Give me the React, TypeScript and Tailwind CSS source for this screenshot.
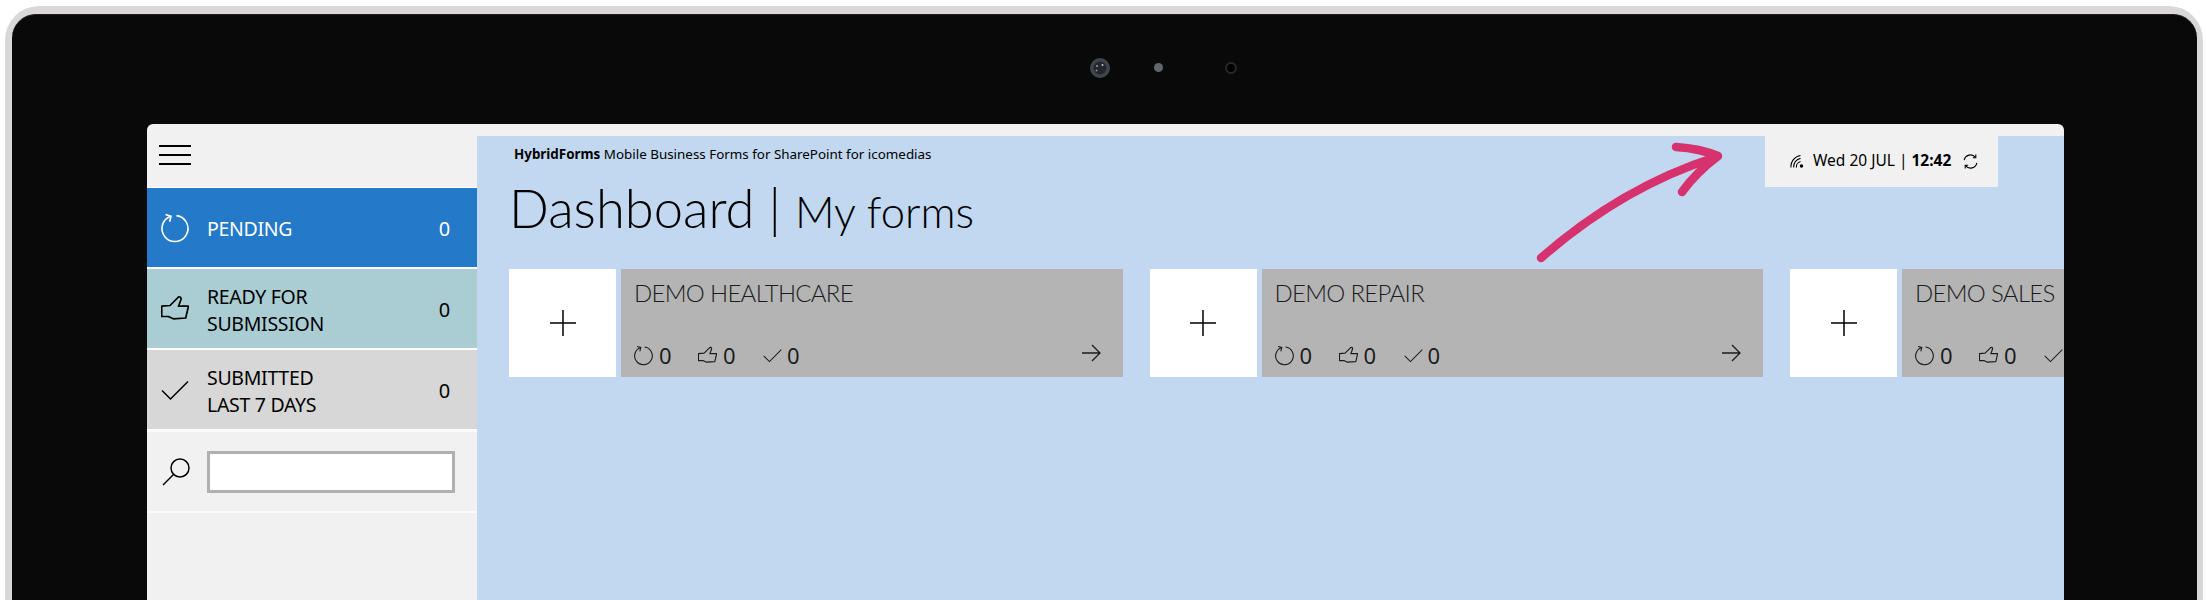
import React from "react";

type IconProps = { size: number; className?: string };

// all the line icons share one 28 box so sidebar and card versions stay the same drawing
const PendingIcon = ({ size, className }: IconProps) => (
  <svg width={size} height={size} viewBox="0 0 28 28" fill="none" stroke="currentColor" strokeWidth="1.6" className={`overflow-visible ${className ?? ""}`}>
    <path d="M15.5 1.6A13 13 0 1 1 9.8 2.2" />
    <path d="M4.5 0.6L10 2.2L8.6 7.8" />
  </svg>
);

const ThumbIcon = ({ size, className }: IconProps) => (
  <svg width={size} height={size} viewBox="0 0 28 28" fill="none" stroke="currentColor" strokeWidth="1.7" strokeLinejoin="round" className={className}>
    <path d="M0.7 21.5V11.2L9 10.5L16.5 3C18 1 20.5 2 20 4.5L17.5 11.2H27.5L24.7 23L12.3 23.8L7.3 21.5Z" />
  </svg>
);

const CheckIcon = ({ size, className }: IconProps) => (
  <svg width={size} height={size} viewBox="0 0 28 28" fill="none" stroke="currentColor" strokeWidth="1.5" className={className}>
    <path d="M1 14.5L9.5 23L27 5.5" />
  </svg>
);

const SearchIcon = ({ size, className }: IconProps) => (
  <svg width={size} height={size} viewBox="0 0 28 28" fill="none" stroke="currentColor" strokeWidth="1.5" className={className}>
    <circle cx="18" cy="10" r="9" />
    <path d="M11.5 16.5L1 27" />
  </svg>
);

const PlusIcon = () => (
  <svg width="28" height="28" viewBox="0 0 28 28" fill="none" stroke="currentColor" strokeWidth="1.5">
    <path d="M14 1V27M1 14H27" />
  </svg>
);

const ArrowIcon = () => (
  <svg width="19" height="18" viewBox="0 0 19 18" fill="none" stroke="currentColor" strokeWidth="1.3">
    <path d="M0 9H18M10 1L18 9L10 17" />
  </svg>
);

const SignalIcon = () => (
  <svg width="14" height="14" viewBox="0 0 14 14" fill="none" stroke="currentColor" strokeWidth="1.1">
    <path d="M1 13.5A11 11 0 0 1 10.5 1.5M3.8 13.5A8.2 8.2 0 0 1 10.5 4.4M6.5 13.5A5.4 5.4 0 0 1 10.5 7.5" />
    <circle cx="11.5" cy="12" r="1.7" fill="currentColor" stroke="none" />
  </svg>
);

const SyncIcon = () => (
  <svg width="15" height="15" viewBox="0 0 15 15" fill="none" stroke="currentColor" strokeWidth="1.1">
    <path d="M1.2 6.2A6.3 6.3 0 0 1 12.4 3.4M13.8 8.8A6.3 6.3 0 0 1 2.6 11.6" />
    <path d="M12.8 0.6V3.8H9.8M2.2 14.4V11.2H5.2" />
  </svg>
);

const CameraLens = () => (
  <svg width="20" height="20" viewBox="0 0 20 20">
    <circle cx="10" cy="10" r="10" fill="#3f464d" />
    <circle cx="10" cy="10" r="6.5" fill="#23272c" />
    <circle cx="7" cy="8" r="1" fill="#9aa0a6" />
    <circle cx="12.5" cy="7" r="1" fill="#c2c6ca" />
    <circle cx="6.5" cy="12.5" r="1" fill="#8a9096" />
  </svg>
);

function NavRow({ lines, bg, text, icon }: { lines: string[]; bg: string; text: string; icon: React.ReactNode }) {
  return (
    <div className={`flex h-[79px] items-center pr-[27px] pl-[14px] text-[19.5px] leading-[27px] tracking-[-0.3px] ${bg} ${text}`}>
      <div className="flex w-[46px] shrink-0 items-center">{icon}</div>
      <div className="flex-1 pt-[2px]">
        {lines.map((line) => (
          <div key={line}>{line}</div>
        ))}
      </div>
      <span className="pt-[2px] text-[20px]">0</span>
    </div>
  );
}

function FormCard({ name }: { name: string }) {
  return (
    <div className="flex shrink-0 gap-[5px]">
      <div className="flex h-[108px] w-[107px] items-center justify-center bg-white text-black">
        <PlusIcon />
      </div>
      <div className="flex h-[108px] w-[501.5px] flex-col justify-between bg-[#b4b4b4] pt-[7px] pr-[22px] pb-[8px] pl-[13px] text-[#1c1c1c]">
        <div className="font-['Lato',sans-serif] text-[24px] font-light leading-[34px] tracking-[-0.7px]">{name}</div>
        <div className="flex items-center text-[22px] leading-[27px]">
          <PendingIcon size={19} />
          <span className="ml-[6px] w-[39px]">0</span>
          <ThumbIcon size={19} />
          <span className="ml-[6px] w-[40px]">0</span>
          <CheckIcon size={19} />
          <span className="ml-[5px]">0</span>
          <div className="mb-[6px] ml-auto">
            <ArrowIcon />
          </div>
        </div>
      </div>
    </div>
  );
}

export default function App() {
  return (
    <div className="relative h-[600px] overflow-hidden bg-white pt-[6px] pr-[3px] pl-[5px] font-['Noto_Sans',sans-serif]">
      <div className="h-[594px] rounded-t-[34px] bg-[#d8d8d8] pt-[8px] pr-[6px] pl-[7px]">
        <div className="h-[586px] rounded-t-[24px] border-t border-[#2a1a1a] bg-[#090909] pr-[133px] pl-[135px]">
          {/* camera and sensors */}
          <div className="flex h-[109px] items-center pb-[4px] pl-[943px]">
            <CameraLens />
            <div className="ml-[44px] h-[9px] w-[9px] rounded-full bg-[#5f666d]" />
            <div className="ml-[62px] h-[12px] w-[12px] rounded-full border-2 border-[#26282b] bg-black" />
          </div>

          <div className="flex h-[476px] overflow-hidden rounded-t-[6px] bg-[#f1f1f1]">
            <aside className="w-[330px] shrink-0">
              <div className="flex h-[63px] flex-col gap-[7px] pt-[21px] pl-[12px]">
                <div className="h-[2px] w-[32px] bg-black" />
                <div className="h-[2px] w-[32px] bg-black" />
                <div className="h-[2px] w-[32px] bg-black" />
              </div>
              <div className="flex flex-col gap-[2px] bg-white py-[1px]">
                <NavRow lines={["PENDING"]} bg="bg-[#2479c8]" text="text-white" icon={<PendingIcon size={28} />} />
                <NavRow lines={["READY FOR", "SUBMISSION"]} bg="bg-[#aacdd4]" text="text-black" icon={<ThumbIcon size={28} />} />
                <NavRow lines={["SUBMITTED", "LAST 7 DAYS"]} bg="bg-[#d7d7d7]" text="text-black" icon={<CheckIcon size={28} />} />
              </div>
              <div className="flex h-[83px] items-center border-y-2 border-[#fafafa] pr-[22px] pl-[15px] text-black">
                <SearchIcon size={28} />
                <input className="ml-[17px] h-[42px] w-[248px] border-[3px] border-[#b0b0b0] bg-white outline-none" />
              </div>
            </aside>

            <main className="mt-[12px] min-w-0 flex-1 overflow-hidden bg-[#c1d8f0] text-black">
              <div className="flex h-[51px] justify-between pr-[66px] pl-[37px]">
                <div className="pt-[8px] text-[13.4px] leading-[20px]">
                  <span className="font-bold">HybridForms</span> Mobile Business Forms for SharePoint for icomedias
                </div>
                <div className="flex w-[233px] items-center bg-[#f1f1f1] pb-[1px] pl-[25px] text-[15.5px]">
                  <SignalIcon />
                  <span className="ml-[9px]">
                    Wed 20 JUL | <span className="font-bold">12:42</span>
                  </span>
                  <div className="ml-[12px]">
                    <SyncIcon />
                  </div>
                </div>
              </div>
              <div className="flex h-[82px] items-baseline pl-[32px] font-['Lato',sans-serif] font-light">
                <span className="text-[52.5px] leading-[42px]">Dashboard</span>
                <span className="ml-[14px] text-[52.5px] leading-[42px]">|</span>
                <span className="ml-[14px] text-[43.6px] leading-[42px]">My forms</span>
              </div>
              <div className="flex gap-[27px] pl-[32px]">
                <FormCard name="DEMO HEALTHCARE" />
                <FormCard name="DEMO REPAIR" />
                <FormCard name="DEMO SALES" />
              </div>
            </main>
          </div>
        </div>
      </div>

      {/* hand drawn pointer lying over the screen */}
      <svg className="absolute top-[130px] left-[1530px]" width="200" height="140" viewBox="1530 130 200 140" fill="none" stroke="#d6326e" strokeLinecap="round" strokeLinejoin="round">
        <path d="M1541 258C1590 215 1650 178 1716 157" strokeWidth="8.5" />
        <path d="M1676 147C1692 148 1706 151 1718 156C1706 165 1692 178 1682 192" strokeWidth="8.5" />
      </svg>
    </div>
  );
}
